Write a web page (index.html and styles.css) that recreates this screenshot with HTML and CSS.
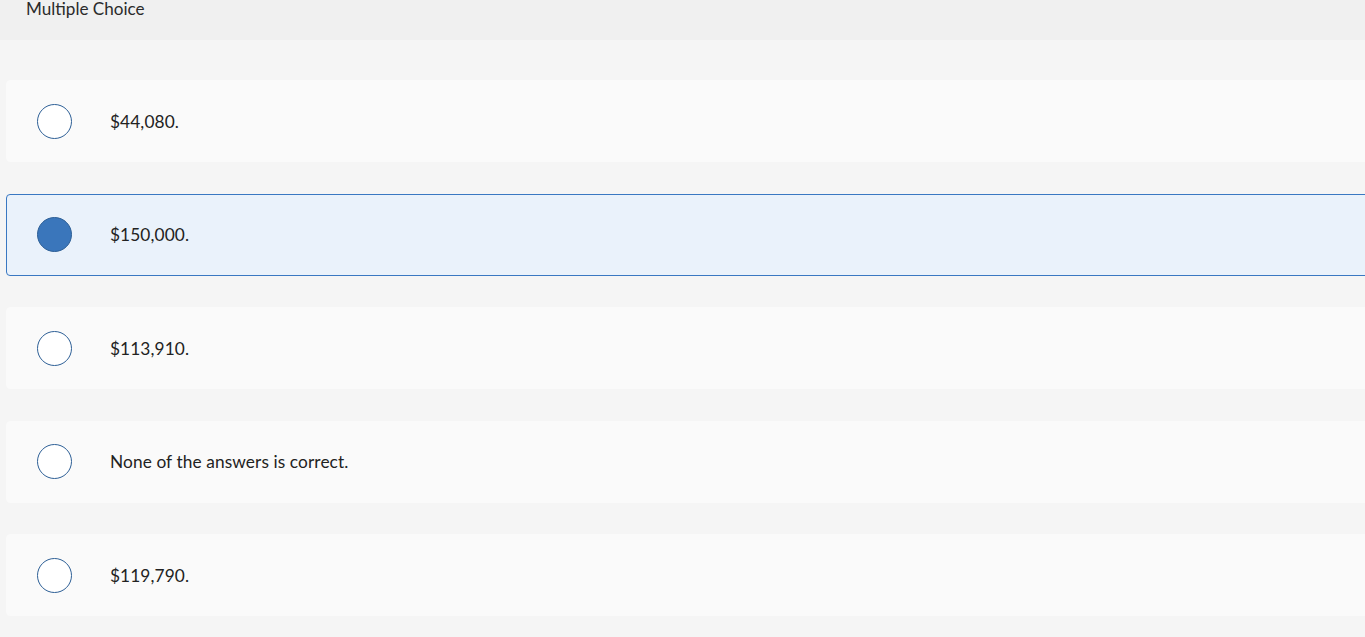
FILE: index.html
```html
<!DOCTYPE html>
<html>
<head>
<meta charset="utf-8">
<link rel="stylesheet" href="styles.css">
</head>
<body>
<div class="header">Multiple Choice</div>
<div class="choices">
  <div class="choice"><span class="radio"></span><span class="label">$44,080.</span></div>
  <div class="choice selected"><span class="radio"></span><span class="label">$150,000.</span></div>
  <div class="choice"><span class="radio"></span><span class="label">$113,910.</span></div>
  <div class="choice"><span class="radio"></span><span class="label">None of the answers is correct.</span></div>
  <div class="choice"><span class="radio"></span><span class="label">$119,790.</span></div>
</div>
</body>
</html>
```
FILE: styles.css
```css
html, body {
  margin: 0;
  padding: 0;
  background: #f5f5f5;
  overflow: hidden;
  font-family: "Lato", "Noto Sans", sans-serif;
  color: #222;
}
.header {
  height: 40px;
  background: #f0f0f0;
  box-sizing: border-box;
  padding: 0 0 0 26px;
  font-size: 17.1px;
  line-height: 17px;
  color: #2b2b2b;
}
.choices {
  display: flex;
  flex-direction: column;
  gap: 31.5px;
  padding: 40px 0 0 6px;
}
.choice {
  width: calc(100% + 20px);
  height: 82px;
  box-sizing: border-box;
  background: #fafafa;
  border: 1px solid #fafafa;
  border-radius: 4px;
  display: flex;
  align-items: center;
  padding-left: 30px;
  gap: 38px;
}
.choice.selected {
  background: #eaf2fb;
  border-color: #3a78c2;
}
.radio {
  width: 35px;
  height: 35px;
  box-sizing: border-box;
  border: 1.5px solid #2d5f96;
  border-radius: 50%;
  background: #fff;
  flex: none;
}
.selected .radio {
  background: #3a76bb;
}
.label {
  font-size: 17.3px;
  color: #222;
  letter-spacing: 0.1px;
}
```
